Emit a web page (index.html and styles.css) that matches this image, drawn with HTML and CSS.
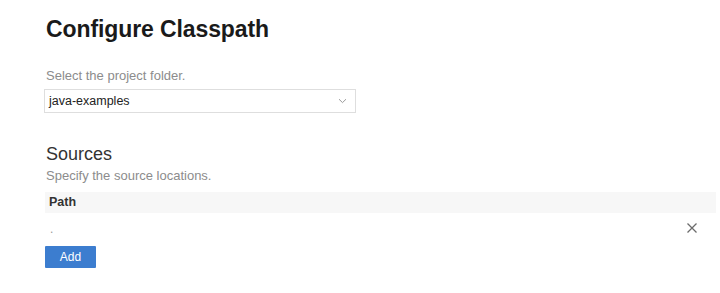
FILE: index.html
```html
<!DOCTYPE html>
<html lang="en">
<head>
<meta charset="utf-8">
<title>Configure Classpath</title>
<link rel="stylesheet" href="styles.css">
</head>
<body>
<main class="page">
  <h1 class="title">Configure Classpath</h1>
  <section class="project">
    <div class="field-label">Select the project folder.</div>
    <div class="select">
      <span class="select-value">java-examples</span>
      <svg class="chevron" width="9" height="6" viewBox="0 0 9 6"><path d="M1 1.2 L4.5 4.6 L8 1.2" fill="none" stroke="#9a9a9a" stroke-width="1"/></svg>
    </div>
  </section>
  <section class="sources">
    <h2 class="section-title">Sources</h2>
    <div class="section-desc">Specify the source locations.</div>
    <div class="table">
      <div class="table-head">Path</div>
      <div class="table-row">
        <span class="cell-path">.</span>
        <svg class="remove" width="12" height="12" viewBox="0 0 12 12"><path d="M1.5 1.5 L10.5 10.5 M10.5 1.5 L1.5 10.5" fill="none" stroke="#6b6b6b" stroke-width="1.3"/></svg>
      </div>
    </div>
    <button class="btn-add" type="button">Add</button>
  </section>
</main>
</body>
</html>
```
FILE: styles.css
```css
html, body {
  margin: 0;
  padding: 0;
  background: #ffffff;
}
body {
  font-family: "Liberation Sans", Arial, sans-serif;
  color: #222;
}
.page {
  padding: 15px 4px 0 45px;
}
.title {
  margin: 0 0 0 1px;
  font-size: 23px;
  line-height: 28px;
  font-weight: 700;
  color: #1a1a1a;
  letter-spacing: -0.1px;
}
.project {
  margin-top: 25px;
}
.field-label {
  font-size: 13px;
  line-height: 16px;
  color: #8c8c8c;
  margin-left: 1px;
  margin-bottom: 5px;
}
.select {
  box-sizing: border-box;
  width: 312px;
  height: 24px;
  margin-left: -1px;
  border: 1px solid #dedede;
  display: flex;
  align-items: center;
  justify-content: space-between;
  padding: 0 8px 0 4px;
}
.select-value {
  font-size: 12.5px;
  color: #222;
}
.chevron {
  display: block;
}
.sources {
  margin-top: 30px;
}
.section-title {
  margin: 0 0 0 1px;
  font-size: 18px;
  line-height: 22px;
  font-weight: 400;
  color: #333;
}
.section-desc {
  margin: 3px 0 8px 1px;
  font-size: 13px;
  line-height: 16px;
  color: #8c8c8c;
}
.table {
  width: 671px;
}
.table-head {
  height: 21px;
  line-height: 21px;
  background: #f7f7f7;
  padding-left: 4px;
  font-size: 12.5px;
  font-weight: 700;
  color: #333;
}
.table-row {
  height: 30px;
  display: flex;
  align-items: center;
  justify-content: space-between;
  padding: 0 18px 0 5px;
}
.cell-path {
  font-size: 12px;
  color: #999;
  position: relative;
  top: 1px;
}
.remove {
  display: block;
}
.btn-add {
  margin-top: 3px;
  width: 51px;
  height: 22px;
  border: none;
  border-radius: 1px;
  background: #3c7dcf;
  color: #fff;
  font-family: "Liberation Sans", Arial, sans-serif;
  font-size: 12px;
  padding: 0;
  display: block;
}
```
